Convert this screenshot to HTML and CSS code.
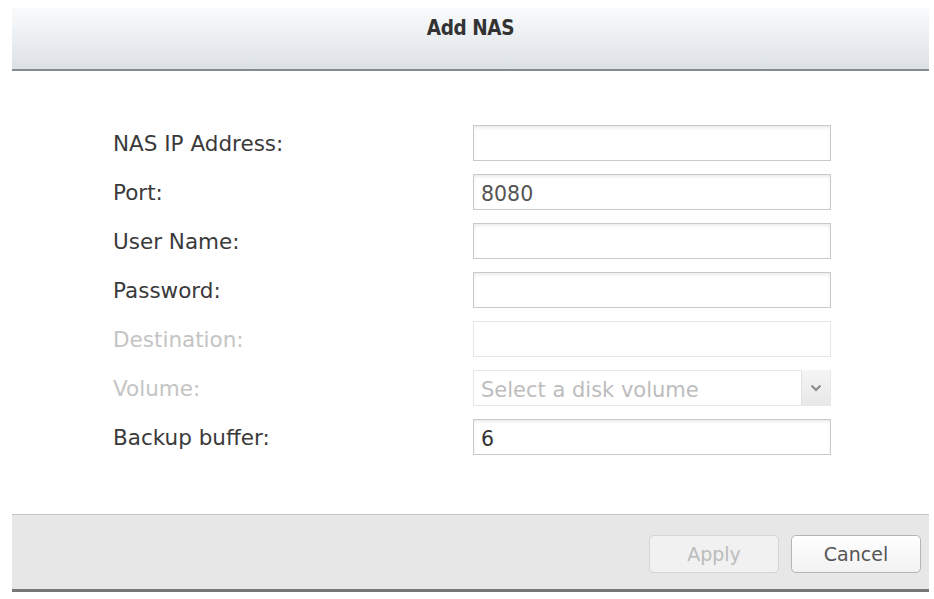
FILE: index.html
```html
<!DOCTYPE html>
<html>
<head>
<meta charset="utf-8">
<link rel="stylesheet" href="styles.css">
</head>
<body>
<div class="dialog">
  <div class="header"><span class="title">Add NAS</span></div>
  <div class="form">
    <div class="row"><label class="label">NAS IP Address:</label><div class="field"></div></div>
    <div class="row"><label class="label">Port:</label><div class="field">8080</div></div>
    <div class="row"><label class="label">User Name:</label><div class="field"></div></div>
    <div class="row"><label class="label">Password:</label><div class="field"></div></div>
    <div class="row disabled"><label class="label">Destination:</label><div class="field"></div></div>
    <div class="row disabled"><label class="label">Volume:</label>
      <div class="field select"><span class="placeholder">Select a disk volume</span>
        <span class="arrow"><svg width="12" height="8" viewBox="0 0 12 8"><path d="M1.5 1.5 L6 6 L10.5 1.5" fill="none" stroke="#8a8a8a" stroke-width="2"/></svg></span>
      </div>
    </div>
    <div class="row"><label class="label">Backup buffer:</label><div class="field dark">6</div></div>
  </div>
  <div class="footer">
    <button class="btn btn-disabled">Apply</button>
    <button class="btn">Cancel</button>
  </div>
</div>
</body>
</html>
```
FILE: styles.css
```css
html, body {
  margin: 0;
  padding: 0;
  background: #ffffff;
}
body {
  font-family: "DejaVu Sans", Verdana, sans-serif;
}
.dialog {
  margin-left: 12px;
  width: 917px;
  padding-top: 8px;
}
.header {
  height: 63px;
  box-sizing: border-box;
  border-bottom: 2px solid #868b90;
  background: linear-gradient(to bottom, #f9fafb 0%, #eef1f4 40%, #dce1e6 100%);
  display: flex;
  justify-content: center;
  padding-top: 8px;
}
.title {
  font-family: "DejaVu Sans Condensed", "DejaVu Sans", sans-serif;
  font-weight: bold;
  font-size: 20.5px;
  color: #333;
  letter-spacing: -0.4px;
}
.form {
  padding: 54px 0 59px 101px;
  display: flex;
  flex-direction: column;
  gap: 13px;
}
.row {
  display: flex;
  align-items: center;
  height: 36px;
}
.label {
  width: 360px;
  font-size: 21.5px;
  color: #3a3a3a;
}
.field {
  width: 358px;
  height: 36px;
  box-sizing: border-box;
  border: 1px solid #c9c9c9;
  box-shadow: inset 0 2px 3px rgba(0,0,0,0.08);
  background: #fff;
  font-size: 20.5px;
  color: #555;
  padding: 4px 0 0 7px;
  display: flex;
  align-items: center;
}
.field.dark {
  color: #333;
}
.disabled .label {
  color: #c4c4c4;
}
.disabled .field {
  border-color: #e6e6e6;
  box-shadow: none;
}
.select {
  padding-right: 0;
  justify-content: space-between;
}
.placeholder {
  color: #bdbdbd;
  font-size: 21px;
}
.arrow {
  width: 28px;
  height: 36px;
  margin-top: -4px;
  background: linear-gradient(to bottom, #f5f5f5, #e8e8e8);
  border-left: 1px solid #e4e4e4;
  display: flex;
  align-items: center;
  justify-content: center;
}
.footer {
  height: 78px;
  box-sizing: border-box;
  border-top: 1px solid #c6c6c6;
  border-bottom: 3px solid #777;
  background: #e7e7e7;
  display: flex;
  justify-content: flex-end;
  align-items: flex-start;
  gap: 12px;
  padding: 20px 8px 0 0;
}
.btn {
  width: 130px;
  height: 38px;
  border: 1px solid #b5b5b5;
  border-radius: 5px;
  background: linear-gradient(to bottom, #ffffff, #f2f2f2);
  font-family: "DejaVu Sans", sans-serif;
  font-size: 19px;
  color: #555;
  padding: 0;
}
.btn-disabled {
  color: #bcbcbc;
  border-color: #d4d4d4;
  background: #f1f1f1;
}
```
